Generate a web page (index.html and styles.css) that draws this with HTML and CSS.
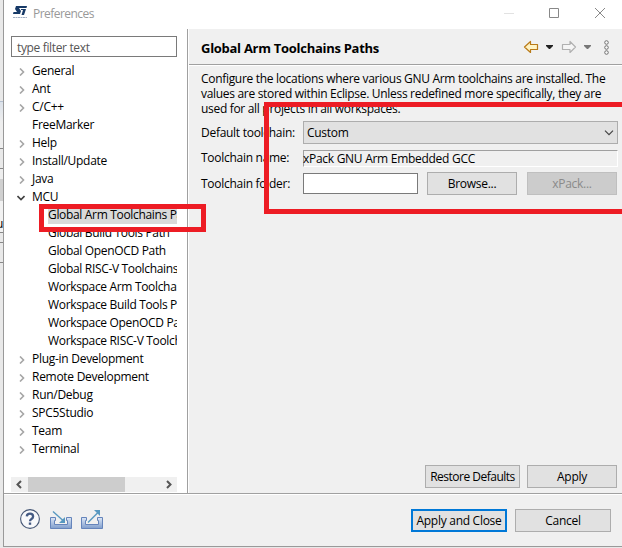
FILE: index.html
```html
<!DOCTYPE html>
<html lang="en">
<head>
<meta charset="utf-8">
<title>Preferences</title>
<link rel="stylesheet" href="styles.css">
</head>
<body>
<div class="screen">
  <div class="behind"><i class="b1"></i><i class="b2"></i><i class="b3"></i><i class="b4"><span>u</span></i><i class="b5"></i><i class="b6"></i></div>
  <div class="window">
    <header class="titlebar">
      <svg class="logo" width="15" height="15" viewBox="0 0 15 15"><path d="M3 1H14L13.500 3H6L8 6 7 9H0L.5 7H4L2 4Z" fill="#173a67"/><path d="M8 4H13L11 10H8.500L10 5H8Z" fill="#173a67"/><path d="M0 12.500H14" stroke="#a3b0c4" stroke-dasharray="2 .5"/></svg>
      <span class="title">Preferences</span>
      <svg class="controls" width="104" height="14" viewBox="0 0 104 14" fill="none" stroke="#888"><path d="M0 7.500H10" stroke="#e2e2e2"/><path d="M45.500 2.500H54.500V11.500H45.500Z"/><path d="M91 2L101 12M101 2L91 12"/></svg>
    </header>
    <div class="main">
      <aside class="side">
        <div class="filter">type filter text</div>
        <ul class="tree">
          <li><svg class="chev" viewBox="0 0 6 8"><path d="M1 .5L4.500 4 1 7.500"/></svg><span>General</span></li>
          <li><svg class="chev" viewBox="0 0 6 8"><path d="M1 .5L4.500 4 1 7.500"/></svg><span>Ant</span></li>
          <li><svg class="chev" viewBox="0 0 6 8"><path d="M1 .5L4.500 4 1 7.500"/></svg><span>C/C++</span></li>
          <li class="leaf"><span>FreeMarker</span></li>
          <li><svg class="chev" viewBox="0 0 6 8"><path d="M1 .5L4.500 4 1 7.500"/></svg><span>Help</span></li>
          <li><svg class="chev" viewBox="0 0 6 8"><path d="M1 .5L4.500 4 1 7.500"/></svg><span>Install/Update</span></li>
          <li><svg class="chev" viewBox="0 0 6 8"><path d="M1 .5L4.500 4 1 7.500"/></svg><span>Java</span></li>
          <li><svg class="chev open" viewBox="0 0 8 6"><path d="M.5 1L4 4.500 7.500 1"/></svg><span>MCU</span></li>
          <li class="child"><span class="selected">Global Arm Toolchains Paths</span></li>
          <li class="child"><span>Global Build Tools Path</span></li>
          <li class="child"><span>Global OpenOCD Path</span></li>
          <li class="child"><span>Global RISC-V Toolchains Paths</span></li>
          <li class="child"><span>Workspace Arm Toolchains Paths</span></li>
          <li class="child"><span>Workspace Build Tools Path</span></li>
          <li class="child"><span>Workspace OpenOCD Path</span></li>
          <li class="child"><span>Workspace RISC-V Toolchains Paths</span></li>
          <li><svg class="chev" viewBox="0 0 6 8"><path d="M1 .5L4.500 4 1 7.500"/></svg><span>Plug-in Development</span></li>
          <li><svg class="chev" viewBox="0 0 6 8"><path d="M1 .5L4.500 4 1 7.500"/></svg><span>Remote Development</span></li>
          <li><svg class="chev" viewBox="0 0 6 8"><path d="M1 .5L4.500 4 1 7.500"/></svg><span>Run/Debug</span></li>
          <li><svg class="chev" viewBox="0 0 6 8"><path d="M1 .5L4.500 4 1 7.500"/></svg><span>SPC5Studio</span></li>
          <li><svg class="chev" viewBox="0 0 6 8"><path d="M1 .5L4.500 4 1 7.500"/></svg><span>Team</span></li>
          <li><svg class="chev" viewBox="0 0 6 8"><path d="M1 .5L4.500 4 1 7.500"/></svg><span>Terminal</span></li>
        </ul>
        <div class="scrollbar">
          <svg width="17" height="15" viewBox="0 0 17 15"><path d="M10 4L6.500 7.500 10 11"/></svg>
          <div class="thumb"></div>
          <svg width="17" height="15" viewBox="0 0 17 15"><path d="M7 4L10.500 7.500 7 11"/></svg>
        </div>
      </aside>
      <section class="page">
        <div class="pagehead">
          <h1>Global Arm Toolchains Paths</h1>
          <svg class="nav" width="90" height="18" viewBox="0 0 90 18">
            <path d="M1.500 9L7.500 3.500V6.500H14.500V11.500H7.500V14.500Z" fill="#fff3c4" stroke="#b97a16" stroke-width="1.200" stroke-linejoin="round"/>
            <path d="M23 7H30V8L27 11H26L23 8Z" fill="#222"/>
            <path d="M52.500 9L47 3.500V6.500H39.500V11.500H47V14.500Z" fill="#f5f5f5" stroke="#b0b0b0" stroke-width="1.200" stroke-linejoin="round"/>
            <path d="M61 7H68V8L65 11H64L61 8Z" fill="#777"/>
            <g fill="#f8f8f8" stroke="#707070"><circle cx="83.500" cy="4.500" r="1.800"/><circle cx="83.500" cy="9.500" r="1.800"/><circle cx="83.500" cy="14.500" r="1.800"/></g>
          </svg>
        </div>
        <p class="desc">Configure the locations where various GNU Arm toolchains are installed. The<br>values are stored within Eclipse. Unless redefined more specifically, they are<br>used for all projects in all workspaces.</p>
        <div class="form">
          <label>Default toolchain:</label>
          <div class="select"><span>Custom</span><svg width="10" height="6" viewBox="0 0 10 6"><path d="M1 .7L5 4.700 9 .7" fill="none" stroke="#444" stroke-width="1.200"/></svg></div>
          <label>Toolchain name:</label>
          <div class="readonly">xPack GNU Arm Embedded GCC</div>
          <label>Toolchain folder:</label>
          <div class="folder"><div class="input"></div><div class="btn">Browse...</div><div class="btn disabled">xPack...</div></div>
        </div>
        <div class="pagebuttons"><div class="btn restore">Restore Defaults</div><div class="btn">Apply</div></div>
      </section>
    </div>
    <footer class="footer">
      <svg class="icons" width="84" height="22" viewBox="0 0 84 22">
        <defs><linearGradient id="g" x2="0" y2="1"><stop stop-color="#dce7f6"/><stop offset="1" stop-color="#7f9dcc"/></linearGradient></defs>
        <circle cx="10" cy="10" r="9.400" fill="#f8f9fb" stroke="#455675" stroke-width="1.100"/>
        <path d="M6.800 7.300Q7 4.700 10 4.700Q13.100 4.700 13.100 7.400Q13.100 8.900 11.500 9.900Q10 10.800 10 12.200" fill="none" stroke="#455b84" stroke-width="2.300"/><rect x="8.800" y="13.500" width="2.400" height="2.300" fill="#455b84"/>
        <path id="tray" d="M30.500 8.500H35.500V11.500H34.500V15.500H47.500V11.500H46.500V8.500H51.500V19.500H30.500Z" fill="url(#g)" stroke="#6584bb"/>
        <path d="M33 2.500L43 11.500" stroke="#5798c0" stroke-width="1.400"/><path d="M45 8V14H39Z" fill="#5798c0"/>
        <use href="#tray" x="31"/>
        <path d="M68 13.500L78 3.500" stroke="#5798c0" stroke-width="1.400"/><path d="M74 1H80V7Z" fill="#5798c0"/>
      </svg>
      <div class="dialogbuttons"><div class="btn primary">Apply and Close</div><div class="btn">Cancel</div></div>
    </footer>
  </div>
  <div class="mark mark-tree"></div>
  <div class="mark mark-form"></div>
</div>
</body>
</html>
```
FILE: styles.css
```css
* { box-sizing: border-box; }
body { margin: 0; background: #e8e8e8; color: #000; font: 12px/16px "Open Sans", "Noto Sans", sans-serif; letter-spacing: -0.28px; }
.screen { position: relative; display: flex; width: 622px; height: 548px; overflow: hidden; }
.behind { width: 3px; display: flex; flex-direction: column; background: #e9e9e9; flex: none; }
.behind i { display: block; border-bottom: 1px solid #888; font-style: normal; overflow: hidden; flex: none; }
.b1 { height: 102px; border-color: #b4bfd0 !important; }
.b2 { height: 47px; background: linear-gradient(#dce2ea, #eee 20px); }
.b3 { height: 20px; }
.b4 { height: 64px; background: linear-gradient(#eee 10px, #d0d0d0 10px, #d0d0d0 32px, #f2f2f2 32px); }
.b4 span { display: block; margin: 47px 0 0 -4px; }
.b5 { height: 10px; }
.b6 { height: 20px; }
.window { flex: 1; height: 547px; display: flex; flex-direction: column; background: #f0f0f0; border-left: 1px solid #999; border-bottom: 1px solid #999; min-width: 0; }
.titlebar { height: 29px; flex: none; display: flex; align-items: center; background: #fff; padding: 0 14px 2px 9px; color: #999; }
.logo { margin-top: -2px; }
.title { margin-left: 5px; flex: 1; letter-spacing: -0.55px; }
.controls { display: block; margin-top: -2px; }
.main { height: 465px; display: flex; border-bottom: 1px solid #a0a0a0; flex: none; }
.side { width: 184px; flex: none; background: #fff; border-right: 1px solid #a0a0a0; padding: 7px 10px 0 7px; display: flex; flex-direction: column; }
.filter { height: 21px; flex: none; border: 1px solid #7a7a7a; padding: 2px 5px; color: #555; letter-spacing: -0.35px; line-height: 17px; }
.tree { list-style: none; margin: 5px 0 0; padding: 0; height: 415px; overflow: hidden; flex: none; }
.tree li { height: 18px; display: flex; align-items: center; padding-left: 8px; white-space: nowrap; }
.tree li span { height: 18px; line-height: 18px; }
.chev { width: 6px; height: 8px; margin: 2px 7px 0 0; fill: none; stroke: #a6a6a6; stroke-width: 1.6; flex: none; }
.chev.open { width: 8px; height: 6px; margin: 2px 7px 0 -2px; stroke: #404040; }
.tree .leaf { padding-left: 21px; }
.tree .child { padding-left: 37px; letter-spacing: -0.33px; }
.tree .selected { background: #d9d9d9; }
.scrollbar { display: flex; height: 15px; background: #f0f0f0; flex: none; }
.scrollbar svg { fill: none; stroke: #555; stroke-width: 2; }
.thumb { width: 97px; background: #cdcdcd; margin-right: 35px; }
.page { flex: 1; display: flex; flex-direction: column; border-left: 1px solid #fff; min-width: 0; }
.pagehead { height: 36px; flex: none; border-bottom: 1px solid #a0a0a0; box-shadow: 0 1px #fff; display: flex; align-items: center; justify-content: space-between; padding: 0 9px 0 12px; }
h1 { margin: 2px 0 0; font-size: 13px; line-height: 18px; letter-spacing: -0.28px; white-space: nowrap; }
.desc { margin: 6px 0 5px 12px; line-height: 15px; white-space: nowrap; letter-spacing: -0.31px; }
.form { display: grid; grid-template-columns: 102px 315px; grid-template-rows: 23px 17px 23px; row-gap: 5.500px; align-items: center; padding-left: 12px; }
.select { height: 23px; border: 1px solid #adadad; background: #e1e1e1; display: flex; align-items: center; justify-content: space-between; padding: 0 3px; }
.readonly { height: 17px; border: 1px solid #fff; border-top-color: #a0a0a0; border-left-color: #a0a0a0; line-height: 16px; white-space: nowrap; text-indent: -1px; }
.folder { display: flex; align-items: center; }
.input { width: 115px; height: 21px; border: 1px solid #7a7a7a; background: #fff; margin-right: 9px; }
.btn { width: 90px; height: 23px; flex: none; border: 1px solid #adadad; background: #e1e1e1; text-align: center; line-height: 21px; white-space: nowrap; }
.btn.disabled { background: #ccc; border-color: #bfbfbf; color: #8a8a8a; margin-left: 10px; }
.pagebuttons { display: flex; justify-content: flex-end; gap: 7px; margin: auto 5px 5px 0; }
.btn.restore { width: 95px; letter-spacing: -0.5px; }
.footer { flex: 1; border-top: 1px solid #fff; display: flex; justify-content: space-between; align-items: flex-start; padding: 14px 11px 0 16px; }
.dialogbuttons { display: flex; gap: 8px; }
.footer .btn { width: 96px; }
.btn.primary { border: 2px solid #0078d7; line-height: 19px; }
.mark { position: absolute; border: 5px solid #ed1c24; }
.mark-tree { left: 39px; top: 204px; width: 167px; height: 28px; }
.mark-form { left: 264px; top: 102px; width: 370px; height: 112px; }
```
